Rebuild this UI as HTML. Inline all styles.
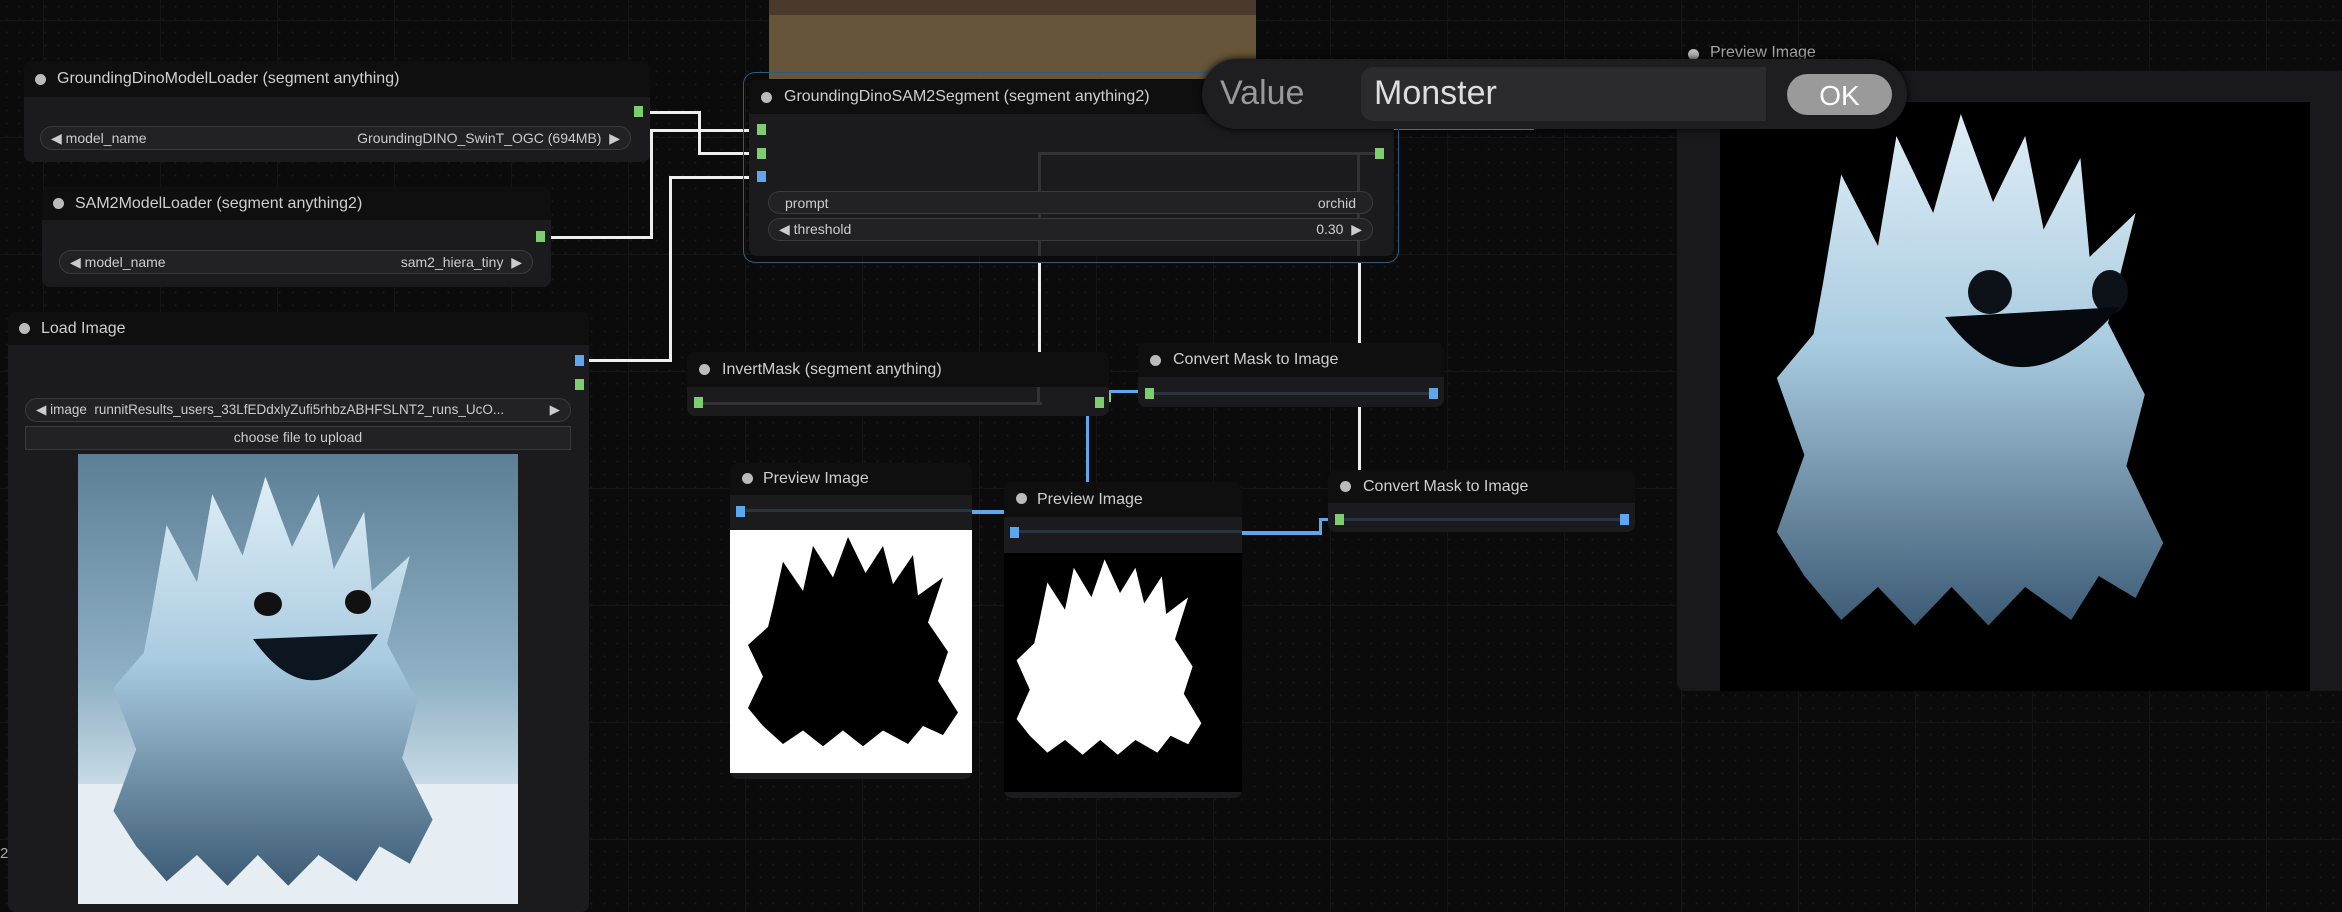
<!DOCTYPE html>
<html><head><meta charset="utf-8"><style>
*{margin:0;padding:0;box-sizing:border-box}
body{width:2342px;height:892px;overflow:hidden;background:#0b0b0c;font-family:"Liberation Sans",sans-serif;position:relative;
background-image:linear-gradient(#151516 1px,transparent 1px),linear-gradient(90deg,#151516 1px,transparent 1px),radial-gradient(#1a1a1b 1px,transparent 1.2px);
background-size:117px 117px,117px 117px,13px 13px;background-position:43px 20px,43px 20px,0 0}
.a{position:absolute}
.node{position:absolute;background:#1b1b1d;border-radius:8px}
.tb{position:absolute;left:0;right:0;top:0;background:#0f0f10;border-radius:8px 8px 0 0;color:#cfcfcf;font-size:16px;padding-left:48px;white-space:nowrap}
.dot{position:absolute;width:11px;height:11px;border-radius:50%;background:#bbb}
.w{position:absolute;background:#222224;border:1.5px solid #3a3a3c;border-radius:14px;color:#ccc;font-size:14px;display:flex;align-items:center;justify-content:space-between;padding:0 10px;white-space:nowrap}
.s{position:absolute;width:9px;height:11px}
.g{background:#7ccf6e}.b{background:#5ba8f0}
.ln{position:absolute;background:#eee}
.gl{position:absolute;background:#333}
</style></head><body>
<svg width="0" height="0" style="position:absolute"><defs>
<path id="m" d="M18,35 L22,15 L30,28 L34,8 L42,22 L48,4 L55,20 L62,8 L66,25 L74,12 L76,30 L86,22 L80,42 L88,55 L84,68 L92,82 L86,92 L78,88 L72,96 L62,90 L54,97 L46,90 L38,97 L30,90 L22,96 L14,88 L8,80 L14,66 L8,52 L16,44 Z"/>
<linearGradient id="ice" x1="0" y1="0" x2="0" y2="1"><stop offset="0" stop-color="#dfeef6"/><stop offset=".45" stop-color="#a9cbe0"/><stop offset="1" stop-color="#3c5a74"/></linearGradient>
</defs></svg>

<div class="a" style="left:769px;top:0;width:487px;height:15px;background:#4a3a2c"></div>
<div class="a" style="left:769px;top:15px;width:487px;height:64px;background:#665538"></div>

<div class="ln" style="left:650px;top:111px;width:50px;height:3px"></div>
<div class="ln" style="left:698px;top:111px;width:3px;height:44px"></div>
<div class="ln" style="left:698px;top:152px;width:63px;height:3px"></div>
<div class="ln" style="left:551px;top:236px;width:102px;height:3px"></div>
<div class="ln" style="left:650px;top:129px;width:3px;height:110px"></div>
<div class="ln" style="left:650px;top:129px;width:111px;height:3px"></div>
<div class="ln" style="left:589px;top:359px;width:82px;height:3px"></div>
<div class="ln" style="left:669px;top:176px;width:3px;height:186px"></div>
<div class="ln" style="left:669px;top:176px;width:92px;height:3px"></div>
<div class="ln" style="left:1038px;top:262px;width:3px;height:92px"></div>
<div class="ln" style="left:1358px;top:262px;width:3px;height:82px"></div>
<div class="ln" style="left:1358px;top:407px;width:3px;height:64px"></div>
<div class="a" style="left:1086px;top:392px;width:3px;height:90px;background:#5ba8f0"></div>
<div class="a" style="left:972px;top:510px;width:32px;height:4px;background:#5ba8f0"></div>
<div class="a" style="left:1242px;top:531px;width:80px;height:4px;background:#5ba8f0"></div>
<div class="a" style="left:1319px;top:518px;width:3px;height:17px;background:#5ba8f0"></div>
<div class="a" style="left:1319px;top:518px;width:20px;height:3px;background:#5ba8f0"></div>
<div class="a" style="left:1108px;top:390px;width:3px;height:12px;background:#7ccf6e"></div>
<div class="a" style="left:1108px;top:390px;width:40px;height:3px;background:#5ba8f0"></div>
<div class="a" style="left:1392px;top:128px;width:142px;height:2px;background:#bbb"></div>

<div class="node" style="left:24px;top:61px;width:626px;height:101px">
<div class="tb" style="height:36px;line-height:36px;padding-left:33px">GroundingDinoModelLoader (segment anything)</div>
<div class="dot" style="left:11px;top:13px"></div>
<div class="w" style="left:16px;top:65px;width:591px;height:24px"><span>◀ model_name</span><span>GroundingDINO_SwinT_OGC (694MB) &nbsp;▶</span></div>
</div>
<div class="s g" style="left:634px;top:106px"></div>

<div class="node" style="left:42px;top:187px;width:509px;height:100px">
<div class="tb" style="height:33px;line-height:33px;padding-left:33px">SAM2ModelLoader (segment anything2)</div>
<div class="dot" style="left:11px;top:11px"></div>
<div class="w" style="left:17px;top:63px;width:474px;height:24px"><span>◀ model_name</span><span>sam2_hiera_tiny &nbsp;▶</span></div>
</div>
<div class="s g" style="left:536px;top:231px"></div>

<div class="node" style="left:8px;top:312px;width:581px;height:600px">
<div class="tb" style="height:33px;line-height:33px;padding-left:33px">Load Image</div>
<div class="dot" style="left:11px;top:11px"></div>
<div class="w" style="left:17px;top:86px;width:546px;height:24px;font-size:13.5px"><span>◀ image &nbsp;runnitResults_users_33LfEDdxlyZufi5rhbzABHFSLNT2_runs_UcO...</span><span>▶</span></div>
<div class="a" style="left:17px;top:114px;width:546px;height:24px;background:#222224;border:1.5px solid #3a3a3c;color:#ccc;font-size:14px;text-align:center;line-height:21px">choose file to upload</div>
<svg class="a" style="left:70px;top:142px" width="440" height="450" viewBox="0 0 440 450">
<defs><linearGradient id="sky" x1="0" y1="0" x2="0" y2="1"><stop offset="0" stop-color="#5d7f96"/><stop offset=".5" stop-color="#8fb0c4"/><stop offset=".8" stop-color="#d8e6ef"/><stop offset="1" stop-color="#eef4f8"/></linearGradient></defs>
<rect width="440" height="450" fill="url(#sky)"/>
<rect x="0" y="330" width="440" height="120" fill="#e6eef4"/>
<g transform="translate(5,5) scale(3.8,4.4)"><use href="#m" fill="url(#ice)"/></g>
<ellipse cx="190" cy="150" rx="14" ry="12" fill="#111"/><ellipse cx="280" cy="148" rx="13" ry="12" fill="#111"/>
<path d="M175,185 Q235,270 300,180 Z" fill="#0c1520"/>
</svg>
</div>
<div class="s b" style="left:575px;top:355px"></div>
<div class="s g" style="left:575px;top:379px"></div>

<div class="a" style="left:743px;top:72px;width:656px;height:191px;border:1.5px solid #2e5a82;border-radius:12px"></div>
<div class="node" style="left:749px;top:80px;width:645px;height:176px">
<div class="tb" style="height:34px;line-height:34px;padding-left:35px">GroundingDinoSAM2Segment (segment anything2)</div>
<div class="dot" style="left:12px;top:12px"></div>
<div class="gl" style="left:290px;top:72px;width:340px;height:3px"></div>
<div class="gl" style="left:289px;top:72px;width:3px;height:104px"></div>
<div class="gl" style="left:608px;top:72px;width:3px;height:104px"></div>
<div class="w" style="left:19px;top:111px;width:605px;height:23px;padding:0 16px"><span>prompt</span><span>orchid</span></div>
<div class="w" style="left:19px;top:138px;width:605px;height:23px"><span>◀ threshold</span><span>0.30 &nbsp;▶</span></div>
</div>
<div class="s g" style="left:757px;top:124px"></div>
<div class="s g" style="left:757px;top:148px"></div>
<div class="s b" style="left:757px;top:171px"></div>
<div class="s g" style="left:1375px;top:148px"></div>

<div class="node" style="left:687px;top:352px;width:422px;height:64px">
<div class="tb" style="height:35px;line-height:35px;padding-left:35px">InvertMask (segment anything)</div>
<div class="dot" style="left:12px;top:12px"></div>
<div class="gl" style="left:15px;top:50px;width:340px;height:3px"></div>
<div class="gl" style="left:350px;top:35px;width:3px;height:18px"></div>
</div>
<div class="s g" style="left:694px;top:397px"></div>
<div class="s g" style="left:1095px;top:397px"></div>

<div class="node" style="left:1138px;top:343px;width:306px;height:64px">
<div class="tb" style="height:34px;line-height:34px;padding-left:35px">Convert Mask to Image</div>
<div class="dot" style="left:12px;top:12px"></div>
<div class="a" style="left:15px;top:49px;width:280px;height:3px;background:#2a3440"></div>
</div>
<div class="s g" style="left:1145px;top:388px"></div>
<div class="s b" style="left:1429px;top:388px"></div>

<div class="node" style="left:1328px;top:470px;width:307px;height:62px">
<div class="tb" style="height:33px;line-height:33px;padding-left:35px">Convert Mask to Image</div>
<div class="dot" style="left:12px;top:11px"></div>
<div class="a" style="left:15px;top:48px;width:282px;height:3px;background:#2a3440"></div>
</div>
<div class="s g" style="left:1335px;top:514px"></div>
<div class="s b" style="left:1620px;top:514px"></div>

<div class="node" style="left:730px;top:463px;width:242px;height:316px">
<div class="tb" style="height:32px;line-height:32px;padding-left:33px">Preview Image</div>
<div class="dot" style="left:12px;top:10px"></div>
<div class="a" style="left:10px;top:46px;width:232px;height:3px;background:#2a3440"></div>
<svg class="a" style="left:0;top:67px" width="242" height="243" viewBox="0 0 242 243"><rect width="242" height="243" fill="#fff"/><g transform="translate(-2,-2) scale(2.5,2.25)"><use href="#m" fill="#000"/></g></svg>
</div>
<div class="s b" style="left:736px;top:506px"></div>

<div class="node" style="left:1004px;top:482px;width:238px;height:316px">
<div class="tb" style="height:35px;line-height:35px;padding-left:33px">Preview Image</div>
<div class="dot" style="left:12px;top:11px"></div>
<div class="a" style="left:10px;top:48px;width:228px;height:3px;background:#2a3440"></div>
<svg class="a" style="left:0;top:71px" width="238" height="239" viewBox="0 0 238 239"><rect width="238" height="239" fill="#000"/><g transform="translate(-5,-2) scale(2.2,2.1)"><use href="#m" fill="#fff"/></g></svg>
</div>
<div class="s b" style="left:1010px;top:527px"></div>

<div class="dot" style="left:1688px;top:49px"></div>
<div class="a" style="left:1710px;top:44px;color:#aaa;font-size:16px">Preview Image</div>
<div class="node" style="left:1677px;top:71px;width:700px;height:620px;background:#19191b;border-radius:8px"></div>
<svg class="a" style="left:1720px;top:102px" width="590" height="589" viewBox="0 0 590 589">
<rect width="590" height="589" fill="#000"/>
<g transform="translate(20,-10) scale(4.6,5.5)"><use href="#m" fill="url(#ice)"/></g>
<ellipse cx="270" cy="190" rx="22" ry="22" fill="#0c1218"/><ellipse cx="390" cy="190" rx="18" ry="22" fill="#0c1218"/>
<path d="M225,215 Q300,320 400,205 Z" fill="#06090e"/>
</svg>

<div class="a" style="left:1202px;top:59px;width:705px;height:70px;background:#1e1e20;border-radius:35px;box-shadow:0 0 8px #000"></div>
<div class="a" style="left:1220px;top:74px;color:#999;font-size:34px">Value</div>
<div class="a" style="left:1361px;top:67px;width:405px;height:54px;background:#2b2b2d;border-radius:12px 0 0 12px"></div>
<div class="a" style="left:1374px;top:74px;color:#ddd;font-size:34px">Monster</div>
<div class="a" style="left:1787px;top:74px;width:105px;height:41px;background:#9a9a9a;border-radius:21px;color:#fff;font-size:28px;text-align:center;line-height:43px">OK</div>

<div class="a" style="left:0;top:845px;color:#aaa;font-size:15px">2</div>
</body></html>
